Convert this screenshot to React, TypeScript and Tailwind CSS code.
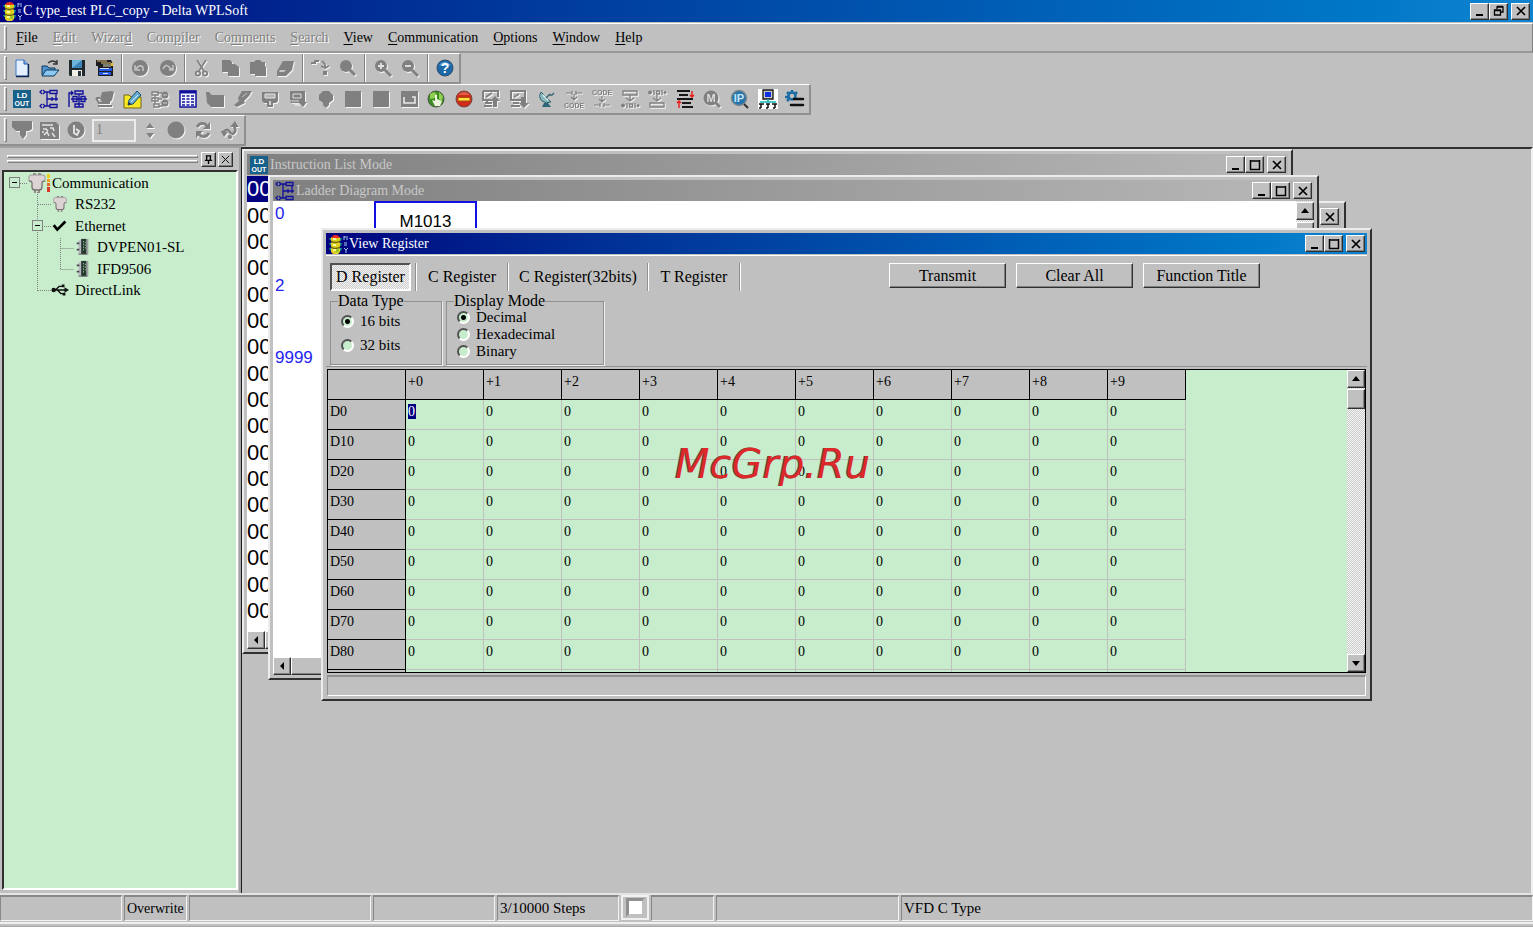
import type { ReactNode } from "react";

const raised =
  "border border-t-white border-l-white border-r-[#303030] border-b-[#303030] bg-[#c0c0c0] shadow-[inset_-1px_-1px_0_#808080]";
const stipple =
  "bg-[repeating-conic-gradient(#f4f4f4_0_25%,#cccccc_0_50%)] bg-[length:2px_2px]";
const emboss = "text-[#808080] [text-shadow:1px_1px_0_#fff]";

type SvgProps = { children: ReactNode; className?: string };

const Svg = ({ children, className = "size-5" }: SvgProps) => (
  <svg viewBox="0 0 20 20" className={`shrink-0 ${className}`} fill="none" aria-hidden="true">
    {children}
  </svg>
);

const SvgText = ({ x, y, size, fill, children }: { x: number; y: number; size: number; fill: string; children: string }) => (
  <text
    x={x}
    y={y}
    fontSize={size}
    fill={fill}
    fontWeight="bold"
    textAnchor="middle"
    fontFamily="Liberation Sans, sans-serif"
  >
    {children}
  </text>
);

const TrafficIcon = () => (
  <Svg>
    <path d="M1 4h3l1 3-3-1zM1 9h3l1 3-3-1zM1 14h3l1 3-3-1zM14 4h-3v3h2zM14 9h-3v3h2zM14 14h-3v3h2z" fill="#1a9484" />
    <path d="M3 3h9v4l-1 1 1 1v4l-1 1 1 1v3l-2 2H5l-2-2v-3l1-1-1-1V9l1-1-1-1z" fill="#e0d020" />
    <path d="M4 3q0-2 3.500-2T11 3l1 1H3z" fill="#e62c20" />
    <path d="M3 7q4 3 9 0M3 13q4 3 9 0" stroke="#6c6414" strokeWidth="1.3" />
    <path d="M5 4h3v2H5zM5 10h3v2H5zM5 15h3v2H5z" fill="#fffa98" />
    <path d="M9 15h2v3H7z" fill="#98c828" />
    <path d="M16 2v4M16 3h4M18 5h2M16 9h3M16 11h3M16 14l2 2 2-2M18 16v3" stroke="#a4cce8" />
  </Svg>
);

const LdOutIcon = () => (
  <Svg>
    <rect x="1" y="1" width="18" height="18" fill="#17608a" />
    <SvgText x={10} y={9} size={8} fill="#fff">LD</SvgText>
    <SvgText x={10} y={17} size={7} fill="#fff">OUT</SvgText>
  </Svg>
);

const LadderIcon = () => (
  <Svg>
    <path
      d="M3 1L1 3l2 2M4 1l2 2-2 2M3 15l-2 2 2 2M4 15l2 2-2 2M6 3h5M6 17h5M8 3v7h4M8 10v7M11 1.500h7v3h-7zM11 15.500h7v3h-7zM17 5v3M12 10h7M13 8v4M17 8v4"
      stroke="#10109a"
      strokeWidth="1.3"
    />
  </Svg>
);

const icons: Record<string, ReactNode> = {
  new: (
    <>
      <path d="M4 2h8l4 4v12H4z" fill="#e4f0ff" stroke="#3c7cd0" />
      <path d="M12 2v4h4" fill="#8cbcf0" stroke="#24549c" />
      <path d="M16.500 6v12.500H4" stroke="#10244c" strokeWidth="1.3" />
    </>
  ),
  open: (
    <>
      <path d="M2 17V8h5l2 2h6v3" fill="#4c94d0" stroke="#103858" />
      <path d="M2 18l4-6h13l-5 6z" fill="#8cc8f4" stroke="#103858" />
      <path d="M8 5q5-4 9 0M17 2v4h-4" stroke="#303030" strokeWidth="1.3" />
    </>
  ),
  save: (
    <>
      <path d="M2 2h16v16H3l-1-1z" fill="#20282c" />
      <path d="M5 2h10v8H5z" fill="#3c84b8" />
      <path d="M5 10l10-8H5z" fill="#6cb4dc" />
      <path d="M5 12h10v6H5z" fill="#f0f0e8" />
      <path d="M11 13h3v5h-3z" fill="#26323a" />
    </>
  ),
  plc: (
    <>
      <path d="M1 2h15l2 4v12H3V8H1z" fill="#1c1c20" />
      <path d="M2 3h10M6 5h10" stroke="#e4c878" />
      <path d="M8 6h8v3H8z" fill="#7c7c70" />
      <path d="M4 10h13v3H4zM4 14h12v3H4z" fill="#2458e0" />
      <path d="M5 10.500h9M8 15.500h5" stroke="#c6dcff" />
      <path d="M16 5h2v3h-2z" fill="#f0c020" />
    </>
  ),
  undo: (
    <>
      <circle cx="10" cy="10" r="8" fill="#808080" />
      <path d="M5 7v5h5M6 11q3-5 7-2v4" stroke="#c4c4c4" strokeWidth="1.5" />
    </>
  ),
  redo: (
    <>
      <circle cx="10" cy="10" r="8" fill="#808080" />
      <path d="M5 11q3-6 6-2 2 3 4 1M15 7v5h-4" stroke="#c4c4c4" strokeWidth="1.5" />
    </>
  ),
  cut: (
    <>
      <path d="M5 2l7 11M14 2L7 13" stroke="#808080" strokeWidth="1.700" />
      <circle cx="6" cy="15.500" r="2.2" stroke="#808080" strokeWidth="1.700" />
      <circle cx="13" cy="15.500" r="2.2" stroke="#808080" strokeWidth="1.700" />
    </>
  ),
  copy: <path d="M2 2h8l2 2v2h3l4 3v9H8v-4H2z" fill="#808080" />,
  paste: <path d="M2 4h4l2-2h4l2 2h3v4l1 1v9H7v-2H2z" fill="#808080" />,
  erase: (
    <>
      <path d="M8 3h11l-2 9-6 6H2v-5z" fill="#808080" />
      <path d="M5 12h6l-2 2H4z" fill="#c8c8c8" />
    </>
  ),
  jump: (
    <>
      <path d="M1 5h5M5 2v4M5 3h4M12 3l3 3v4M11 8l4 2 4-2" stroke="#808080" strokeWidth="1.8" />
      <path d="M13 13h4v4h-4z" fill="#808080" />
    </>
  ),
  find: (
    <>
      <circle cx="8" cy="8" r="6" fill="#808080" />
      <path d="M12 12l5 5" stroke="#808080" strokeWidth="3" />
    </>
  ),
  zoomin: (
    <>
      <circle cx="8" cy="8" r="6" fill="#808080" />
      <path d="M12 12l6 6" stroke="#808080" strokeWidth="3" />
      <path d="M5 8h6M8 5v6" stroke="#e4e4e4" strokeWidth="1.8" />
    </>
  ),
  zoomout: (
    <>
      <circle cx="8" cy="8" r="6" fill="#808080" />
      <path d="M12 12l6 6" stroke="#808080" strokeWidth="3" />
      <path d="M5 8h6" stroke="#e4e4e4" strokeWidth="1.8" />
    </>
  ),
  help: (
    <>
      <circle cx="10" cy="10" r="8" fill="#1c68a8" stroke="#34506c" />
      <path d="M4 7q5-6 12 0-5 2-12 0z" fill="#5ca4d4" />
      <SvgText x={10} y={15} size={14} fill="#fff">?</SvgText>
    </>
  ),
  sfc: (
    <>
      <path d="M2 18V4h4M4 2l2 2-2 2M8 2h8v3H8zM12 5v13M4 10h16M8 15h8v3H8z" stroke="#10109a" strokeWidth="1.4" />
      <path d="M6 7.500h4v5H6zM14 7.500h4v5h-4z" stroke="#10109a" strokeWidth="1.3" />
    </>
  ),
  compile: (
    <>
      <path d="M7 3l10-1 2 1-2 8-2 2H7L5 10z" fill="#808080" />
      <path d="M1 9l3 5h11M3 17h14M1 9h4" stroke="#808080" strokeWidth="2" />
    </>
  ),
  edit: (
    <>
      <path d="M2 6h5l2 2h10v11H2z" fill="#f8e820" stroke="#70641c" />
      <path d="M6 16l1-5 8-9 4 4-8 9z" fill="#64acd4" stroke="#20506c" />
      <path d="M9 13l7-7" stroke="#d8f0ff" />
      <path d="M6 16l1-3 2 2z" fill="#222" />
    </>
  ),
  tree: (
    <>
      <path d="M2 3h6v3H2zM2 9h6v3H2zM4 15h5v3H4zM5 6v9M8 4h4M8 10h4M9 17h4" stroke="#808080" strokeWidth="1.4" />
      <circle cx="15" cy="6" r="3.5" fill="#808080" />
      <circle cx="15" cy="14" r="3.5" fill="#808080" />
      <path d="M13 6h4M13 14h4" stroke="#ccc" />
    </>
  ),
  grid: (
    <>
      <path d="M2 2h16v16H2z" fill="#f4f4ff" stroke="#10109a" strokeWidth="1.5" />
      <path d="M2 3h16" stroke="#10109a" strokeWidth="3" />
      <path d="M4 7h3M8.500 7h3M13 7h3M4 10h3M8.500 10h3M13 10h3M4 13h3M8.500 13h3M13 13h3M4 16h3M8.500 16h3M13 16h3" stroke="#10109a" strokeWidth="1.4" />
    </>
  ),
  folder: <path d="M1 3h3l3 3h12v12H6l-4-4z" fill="#808080" />,
  wand: (
    <>
      <path d="M9 2h10l-3 5-5 5 1 2-8 4-3-2 5-4-1-3z" fill="#808080" />
      <path d="M14 4l-5 4" stroke="#c8c8c8" />
    </>
  ),
  monitor: (
    <>
      <path d="M2 3h16v9l-2 2h-3v4H7v-4H4l-2-2z" fill="#808080" />
      <path d="M5 5h10v4H5z" fill="#b4b4b4" stroke="#e4e4e4" />
      <path d="M9 12h2v4H9z" fill="#d0d0d0" />
    </>
  ),
  monitorDown: (
    <>
      <path d="M2 2h15v11h2l-4 5-4-4H4l-2-1 2-2H2z" fill="#808080" />
      <path d="M5 5h8v4H5zM4 12h7M6 15h6" stroke="#e0e0e0" />
    </>
  ),
  bulb: <path d="M7 2h6l4 4v5l-4 3v2l-3 3-3-3v-2l-4-3V6z" fill="#808080" />,
  block: <path d="M2 2h16v16H2z" fill="#808080" />,
  frame: (
    <>
      <path d="M2 2h17v16H2z" fill="#808080" />
      <path d="M5 8v6h11V8h-3" stroke="#e8e8e8" strokeWidth="1.6" />
    </>
  ),
  run: (
    <>
      <circle cx="10" cy="10" r="8" fill="#3c8c24" stroke="#4c5c44" />
      <path d="M4 5q5-4 7 1l-2 3-5 1zM13 3l4 4-1 5-3-2z" fill="#90d050" />
      <path d="M9 6v6l-3-1 3 6h5l2-5-5-2V6z" fill="#ecf4dc" />
    </>
  ),
  stop: (
    <>
      <circle cx="10" cy="10" r="8" fill="#d02c1c" stroke="#7c4440" />
      <path d="M4 6q6-6 12 0z" fill="#dc6048" />
      <path d="M4 8.500h12v3.500H4z" fill="#ffe43c" stroke="#b04c14" />
    </>
  ),
  upload: (
    <>
      <path d="M2 2h15v6M2 2v9h8M4 14h7M3 17h8M5 8l6-4M6 11v3" stroke="#808080" strokeWidth="2" />
      <path d="M14 7l5 5h-3v6h-4v-6h-3z" fill="#808080" />
    </>
  ),
  download: (
    <>
      <path d="M2 2h14v9H2zM4 14h6M2 17h9M5 8l5-3" stroke="#808080" strokeWidth="2" />
      <path d="M12 8h5v6h3l-5 5-5-5h2z" fill="#808080" />
    </>
  ),
  dish: (
    <>
      <path d="M4 3q-3 5 1 9 4 3 9 1z" fill="#8cb8bc" stroke="#2c6470" />
      <path d="M6 6l5 5" stroke="#e0f4f4" strokeWidth="1.500" />
      <path d="M9 9l4-4M12 6h3l2-2" stroke="#34646c" strokeWidth="1.4" />
      <path d="M7 14l-2 4h9l-3-4" fill="#2c6478" />
    </>
  ),
  toCode: (
    <>
      <path d="M2 4h6M8 2v4M12 2v4M12 4h6M10 5v6M7 8l3 3 3-3" stroke="#808080" strokeWidth="1.2" />
      <SvgText x={10} y={19} size={7} fill="#808080">CODE</SvgText>
    </>
  ),
  fromCode: (
    <>
      <SvgText x={10} y={6} size={7} fill="#808080">CODE</SvgText>
      <path d="M10 7v6M7 10l3 3 3-3M2 16h6M8 14v4M12 14v4M12 16h6" stroke="#808080" strokeWidth="1.2" />
    </>
  ),
  toSfc: (
    <>
      <path d="M3 2h14v4H3zM10 6v6M6 9l4 3 4-3M7 14v5M15 14v5M9.500 15h3v3h-3z" stroke="#808080" strokeWidth="1.3" />
      <circle cx="3" cy="16.500" r="2" fill="#808080" />
      <circle cx="18" cy="16.500" r="1.500" fill="#808080" />
    </>
  ),
  fromSfc: (
    <>
      <path d="M3 14h14v4H3zM10 6v6M6 9l4 3 4-3M7 1v5M15 1v5M9.500 2h3v3h-3z" stroke="#808080" strokeWidth="1.3" />
      <circle cx="3" cy="3.500" r="2" fill="#808080" />
      <circle cx="18" cy="3.500" r="1.500" fill="#808080" />
    </>
  ),
  steps: (
    <>
      <path d="M2 2h13M4 6h9M2 10h16M7 14h9M7 18h11" stroke="#181818" strokeWidth="1.8" />
      <path d="M17 2v6M15 6l2 2 2-2M4 12v7M2 14l2-2 2 2" stroke="#f01818" strokeWidth="1.4" />
    </>
  ),
  findM: (
    <>
      <circle cx="9" cy="9" r="7.500" fill="#808080" />
      <path d="M14 14l4 4" stroke="#808080" strokeWidth="3" />
      <SvgText x={9} y={13} size={11} fill="#dcdcdc">M</SvgText>
    </>
  ),
  findIp: (
    <>
      <circle cx="9" cy="9" r="7.500" fill="#2474ac" stroke="#7c888c" strokeWidth="1.500" />
      <path d="M14 15l4 4" stroke="#303030" strokeWidth="2" />
      <SvgText x={9} y={13} size={11} fill="#c8e4f8">IP</SvgText>
    </>
  ),
  network: (
    <>
      <path d="M0 0h20v20H0z" fill="#fff" />
      <path d="M5 1h10v9H5z" fill="#c8c8c8" stroke="#101010" strokeWidth="1.300" />
      <path d="M7 3h6v5H7z" fill="#1030e0" />
      <path d="M10 10v3M2 13h16" stroke="#10b4b4" strokeWidth="1.500" />
      <path d="M1 15h5M8 15h4M14 15h5M3 15v4M10 15v4M17 15v4M1 19h2M8 19h2M15 19h2" stroke="#101010" strokeWidth="1.500" />
    </>
  ),
  gear: (
    <>
      <circle cx="7" cy="7" r="3.500" stroke="#1c6ca4" strokeWidth="2.500" />
      <path d="M7 1v2M0 8h3M2 3l2 2M12 3l-2 2M2 12l2-2" stroke="#1c6ca4" strokeWidth="2.500" />
      <path d="M9 10h9M6 16h12" stroke="#101010" strokeWidth="2.500" strokeLinecap="round" />
    </>
  ),
  funnel: <path d="M0 1h20v8l-3 2h-3v4l-3 4-3-4v-4H4L0 7z" fill="#808080" />,
  pattern: (
    <>
      <path d="M1 2h16l3 3v14H1z" fill="#808080" />
      <path d="M3 5h11M4 9h3l2 2M11 8h3l1 3M5 15l3-3 2 4M13 13l3 4M3 12h2" stroke="#e4e4e4" strokeWidth="1.500" />
    </>
  ),
  timer: (
    <>
      <circle cx="10" cy="10" r="8.500" fill="#808080" />
      <path d="M8 5v8l3 2 2-4-3-2" stroke="#e8e8e8" strokeWidth="1.800" />
    </>
  ),
  dot: <circle cx="10" cy="10" r="8.500" fill="#808080" />,
  cycle: (
    <>
      <path d="M4 7q3-5 8-3l2 2M16 13q-3 5-8 3l-2-2" stroke="#808080" strokeWidth="2.800" />
      <path d="M17 2v7h-7zM3 18v-7h7z" fill="#808080" />
    </>
  ),
  route: (
    <>
      <path d="M2 13q5-5 7-2t4 3q4-3 1-8" stroke="#808080" strokeWidth="2.600" />
      <path d="M15 1l4 6H10zM1 11l7 1-4 5z" fill="#808080" />
      <circle cx="10" cy="17" r="2" fill="#808080" />
    </>
  ),
  ld: <LdOutIcon />,
  ladder: <LadderIcon />,
};

type ToolItem = { name: string; off?: boolean };

const Tool = ({ name, off }: ToolItem) => (
  <button
    type="button"
    aria-label={name}
    disabled={off}
    className={`flex h-7 flex-1 items-center justify-center ${off ? "drop-shadow-[1px_1px_0_#f4f4f4]" : ""}`}
  >
    {name === "ld" || name === "ladder" ? icons[name] : <Svg>{icons[name]}</Svg>}
  </button>
);

const Grip = () => (
  <span className="mr-px ml-1 h-[24px] w-[3px] shrink-0 border border-t-white border-l-white border-r-[#808080] border-b-[#808080]" />
);

const Sep = () => (
  <span className="flex h-7 w-[7px] shrink-0 justify-center">
    <span className="w-[2px] border-r border-l border-r-white border-l-[#808080]" />
  </span>
);

const fileTools: (ToolItem | null)[] = [
  { name: "new" },
  { name: "open" },
  { name: "save" },
  { name: "plc" },
  null,
  { name: "undo", off: true },
  { name: "redo", off: true },
  null,
  { name: "cut", off: true },
  { name: "copy", off: true },
  { name: "paste", off: true },
  { name: "erase", off: true },
  null,
  { name: "jump", off: true },
  { name: "find", off: true },
  null,
  { name: "zoomin", off: true },
  { name: "zoomout", off: true },
  null,
  { name: "help" },
];

const plcTools: ToolItem[] = [
  { name: "ld" },
  { name: "ladder" },
  { name: "sfc" },
  { name: "compile", off: true },
  { name: "edit" },
  { name: "tree", off: true },
  { name: "grid" },
  { name: "folder", off: true },
  { name: "wand", off: true },
  { name: "monitor", off: true },
  { name: "monitorDown", off: true },
  { name: "bulb", off: true },
  { name: "block", off: true },
  { name: "block", off: true },
  { name: "frame", off: true },
  { name: "run" },
  { name: "stop" },
  { name: "upload", off: true },
  { name: "download", off: true },
  { name: "dish" },
  { name: "toCode", off: true },
  { name: "fromCode", off: true },
  { name: "toSfc", off: true },
  { name: "fromSfc", off: true },
  { name: "steps" },
  { name: "findM", off: true },
  { name: "findIp" },
  { name: "network" },
  { name: "gear" },
];

const barClass =
  "flex h-[31px] items-center border-t border-r-2 border-b-2 border-t-white border-r-[#909090] border-b-[#909090]";

const menus = [
  { key: "F", rest: "ile" },
  { key: "E", rest: "dit", off: true },
  { before: "Wizar", key: "d", rest: "", off: true },
  { before: "Com", key: "p", rest: "iler", off: true },
  { before: "Co", key: "m", rest: "ments", off: true },
  { key: "S", rest: "earch", off: true },
  { key: "V", rest: "iew" },
  { key: "C", rest: "ommunication" },
  { key: "O", rest: "ptions" },
  { key: "W", rest: "indow" },
  { key: "H", rest: "elp" },
];

const CaptionButton = ({ kind }: { kind: "minimize" | "maximize" | "restore" | "close" }) => (
  <button
    type="button"
    aria-label={kind}
    className={`flex h-[17px] w-[19px] items-center justify-center ${raised} ${kind === "close" ? "ml-[3px]" : ""}`}
  >
    <svg viewBox="0 0 12 12" className="size-3" fill="none" stroke="#000" aria-hidden="true">
      {kind === "minimize" && <path d="M2 10h7" strokeWidth="2" />}
      {kind === "maximize" && <path d="M1.500 1v9.500h9V1M1 2h10" strokeWidth="1.500" />}
      {kind === "restore" && <path d="M4 4V2h6v5H8M4 1.500h6M1.500 5v5h6V5zM1 5.500h7" strokeWidth="1.300" />}
      {kind === "close" && <path d="M2 2l8 8M10 2l-8 8" strokeWidth="1.700" />}
    </svg>
  </button>
);

type MdiWindowProps = {
  title: string;
  icon: ReactNode;
  place: string;
  active?: boolean;
  children?: ReactNode;
};

const MdiWindow = ({ title, icon, place, active, children }: MdiWindowProps) => (
  <section
    className={`absolute flex flex-col border-2 border-t-[#ececec] border-r-[#303030] border-b-[#303030] border-l-[#ececec] bg-[#c0c0c0] p-[3px] ${place}`}
  >
    <header
      className={`flex h-[21px] shrink-0 items-center bg-linear-to-r pr-[2px] pl-[2px] text-sm ${
        active ? "from-[#000080] to-[#1084d0] text-white" : "from-[#808080] to-[#b8b8b8] text-[#c8c8c8]"
      }`}
    >
      {icon}
      <h2 className="flex-1 pl-[1px]">{title}</h2>
      <CaptionButton kind="minimize" />
      <CaptionButton kind="maximize" />
      <CaptionButton kind="close" />
    </header>
    {children}
  </section>
);

const ArrowButton = ({ dir }: { dir: "up" | "down" | "left" }) => (
  <button type="button" aria-label={`Scroll ${dir}`} className={`flex size-[18px] shrink-0 items-center justify-center ${raised}`}>
    <svg viewBox="0 0 10 10" className="size-[10px]" aria-hidden="true">
      {dir === "up" && <path d="M5 2l4 5H1z" />}
      {dir === "down" && <path d="M1 3h8L5 8z" />}
      {dir === "left" && <path d="M7 1v8L3 5z" />}
    </svg>
  </button>
);

const InstructionList = () => (
  <div className="flex min-h-0 flex-1 flex-col pt-px">
    <div className="min-h-0 flex-1 overflow-hidden bg-white font-['Liberation_Sans',sans-serif] text-[22px] leading-[22px]">
      <ol className="flex h-[448px] flex-col">
        {Array.from({ length: 17 }, (_, i) => (
          <li
            key={i}
            className={`flex flex-1 items-center ${i === 0 ? "w-[22px] bg-[#000080] text-white" : "text-black"}`}
          >
            00
          </li>
        ))}
      </ol>
    </div>
    <div className={`flex ${stipple}`}>
      <ArrowButton dir="left" />
      <span className={`w-10 ${raised}`} />
    </div>
  </div>
);

const LadderDiagram = () => (
  <div className="flex min-h-0 flex-1 flex-col">
    <div className="flex min-h-0 flex-1 bg-white font-['Liberation_Sans',sans-serif] text-[17px]">
      <ol className="w-[101px] pl-[2px] leading-[26px] text-[#2424f0]">
        <li className="h-[72px]">0</li>
        <li className="h-[72px]">2</li>
        <li className="h-[72px]">9999</li>
      </ol>
      <div className="h-[60px] w-[103px] border-2 border-[#1010e0] pt-[6px] text-center text-black">M1013</div>
      <div className={`ml-auto w-[18px] pt-px ${stipple}`}>
        <ArrowButton dir="up" />
        <div className={`mt-[2px] h-10 ${raised}`} />
      </div>
    </div>
    <div className={`flex ${stipple}`}>
      <ArrowButton dir="left" />
      <span className={`w-40 ${raised}`} />
    </div>
  </div>
);

const Expander = ({ open }: { open: string }) => (
  <button
    type="button"
    aria-label={open}
    className="flex size-[11px] shrink-0 items-center justify-center border border-[#808080] bg-[#c7edcc]"
  >
    <span className="h-px w-[5px] bg-black" />
  </button>
);

const PlugIcon = ({ className }: { className: string }) => (
  <Svg className={className}>
    <path d="M6 0h3v3H6zM11 0h3v3h-3zM7 16h2v4H7zM11 16h2v4h-2z" fill="#948c8c" />
    <path d="M2 4q0-2 2-2h12q2 0 2 2v4q-3 0-3 2v4q0 3-3 3H8q-3 0-3-3v-4q0-2-3-2z" fill="#dcd4d4" />
    <path d="M2 8q3 0 3 2v4q0 3 3 3h4q3 0 3-3v-4q0-2 3-2" stroke="#787070" strokeWidth="1.300" />
    <path d="M2 8V4q0-2 2-2h12q2 0 2 2v4" stroke="#a09898" />
  </Svg>
);

const ModuleIcon = () => (
  <Svg className="size-[18px]">
    <path d="M5 3l4-2v17H5z" fill="#b8b8c0" />
    <path d="M8 1h6v17H8z" fill="#24382c" />
    <path d="M14 1h2v17h-2z" fill="#a0a0a4" />
    <path d="M3 6h3M3 13h3" stroke="#484850" strokeWidth="2" />
    <path d="M10 4h1M10 7h1M10 10h1M10 13h1M12 5h1M12 8h1M12 11h1" stroke="#9cc4a8" strokeWidth="1.500" />
    <path d="M5 18h10" stroke="#606068" />
  </Svg>
);

const rowClass = "relative flex flex-1 items-center";

const CommunicationTree = () => (
  <div className="relative">
    <svg className="absolute top-0 left-0 h-[130px] w-[90px]" fill="none" stroke="#808080" strokeDasharray="1 1" aria-hidden="true">
      <path d="M16 11.500h8M33.500 20v99M34 32.500h13M40 54.500h8M34 118.500h14M56.500 66v32M56.500 76.500h13M56.500 97.500h13" />
    </svg>
    <ul className="flex h-[129px] flex-col text-[15px] leading-[20px] text-black">
      <li className={`${rowClass} pl-[5px]`}>
        <Expander open="Collapse Communication" />
        <span className="flex w-[32px] items-center pl-[7px]">
          <PlugIcon className="size-5" />
          <svg viewBox="0 0 4 20" className="h-5 w-1" aria-hidden="true">
            <path d="M0 1h3v4H0z" fill="#f0d018" />
            <path d="M0 6h3v3H0z" fill="#f0a018" />
            <path d="M0 10h3v3H0z" fill="#e86820" />
            <path d="M0 14h3v5H0z" fill="#d83828" />
          </svg>
        </span>
        Communication
      </li>
      <li className={`${rowClass} pl-[48px]`}>
        <span className="w-[23px]">
          <PlugIcon className="size-4" />
        </span>
        RS232
      </li>
      <li className={`${rowClass} pl-[28px]`}>
        <Expander open="Collapse Ethernet" />
        <span className="w-[32px] pl-[8px]">
          <Svg className="size-[18px]">
            <path d="M3 9l4 5 9-9" stroke="#000" strokeWidth="3" />
          </Svg>
        </span>
        Ethernet
      </li>
      <li className={`${rowClass} pl-[70px]`}>
        <span className="w-[23px]">
          <ModuleIcon />
        </span>
        DVPEN01-SL
      </li>
      <li className={`${rowClass} pl-[70px]`}>
        <span className="w-[23px]">
          <ModuleIcon />
        </span>
        IFD9506
      </li>
      <li className={`${rowClass} pl-[47px]`}>
        <span className="w-[24px]">
          <Svg className="size-[18px]">
            <path d="M2 10h15M5 10l4-4h4M7 10l4 4h3" stroke="#101010" strokeWidth="1.500" />
            <circle cx="3" cy="10" r="2.500" fill="#101010" />
            <path d="M15 7l5 3-5 3zM12 4h3v3h-3zM13 13h3v3h-3z" fill="#101010" />
          </Svg>
        </span>
        DirectLink
      </li>
    </ul>
  </div>
);

const Sidebar = () => (
  <aside className="flex w-[241px] shrink-0 flex-col border-t-2 border-r-2 border-t-[#a0a0a0] border-r-[#a0a0a0] pr-px pb-[3px] pl-[2px]">
    <div className="flex h-[22px] items-center gap-[2px] px-[5px]">
      <span className="mr-px flex flex-1 flex-col gap-[2px]">
        <span className="h-[3px] border border-t-white border-r-[#808080] border-b-[#808080] border-l-white" />
        <span className="h-[3px] border border-t-white border-r-[#808080] border-b-[#808080] border-l-white" />
      </span>
      <button type="button" aria-label="Pin panel" className={`flex size-[15px] items-center justify-center ${raised}`}>
        <svg viewBox="0 0 12 12" className="size-[11px]" fill="none" stroke="#000" strokeWidth="1.500" aria-hidden="true">
          <path d="M4 2v5M3 2h6M8 2v5M2 7h8M6 7v4" />
        </svg>
      </button>
      <button type="button" aria-label="Close panel" className={`flex size-[15px] items-center justify-center ${raised}`}>
        <svg viewBox="0 0 12 12" className="size-[11px]" stroke="#000" aria-hidden="true">
          <path d="M2 2l8 8M10 2l-8 8" />
        </svg>
      </button>
    </div>
    <div className="flex-1 border-2 border-t-[#303030] border-r-white border-b-white border-l-[#303030] bg-[#c7edcc]">
      <CommunicationTree />
    </div>
  </aside>
);

type RadioProps = { name: string; label: string; checked?: boolean; className?: string };

const Radio = ({ name, label, checked, className = "" }: RadioProps) => (
  <label className={`flex items-center text-[15px] ${className}`}>
    <input
      type="radio"
      name={name}
      defaultChecked={checked}
      className="size-[13px] shrink-0 appearance-none rounded-full border-2 border-t-[#505050] border-r-white border-b-white border-l-[#505050] bg-[#c7edcc] checked:bg-[radial-gradient(circle,#000_0_2px,#c7edcc_3px)]"
    />
    {label}
  </label>
);

const fieldsetClass =
  "h-[72px] border border-[#909090] px-[7px] shadow-[1px_1px_0_#f0f0f0]";

const tabs = [
  { label: "C Register", width: "w-[90px]" },
  { label: "C Register(32bits)", width: "w-[138px]" },
  { label: "T Register", width: "w-[90px]" },
];

const TabLine = () => <span className="w-[2px] border-r border-l border-r-white border-l-[#909090]" />;

const rows = ["D0", "D10", "D20", "D30", "D40", "D50", "D60", "D70", "D80"];
const columns = ["+0", "+1", "+2", "+3", "+4", "+5", "+6", "+7", "+8", "+9"];
const headCell =
  "h-[30px] w-[78px] border-r border-b border-black bg-[#c0c0c0] px-[2px] pt-[2px] text-left align-top font-normal";

const RegisterTable = () => (
  <table className="w-[858px] table-fixed border-separate border-spacing-0 self-start text-sm text-black">
    <thead>
      <tr>
        <td className={headCell} />
        {columns.map((column) => (
          <th key={column} scope="col" className={headCell}>
            {column}
          </th>
        ))}
      </tr>
    </thead>
    <tbody>
      {rows.map((row) => (
        <tr key={row}>
          <th scope="row" className={headCell}>
            {row}
          </th>
          {columns.map((column) => (
            <td key={column} className="h-[30px] border-r border-b border-[#c0c0c0] px-[2px] pt-[2px] align-top">
              {row === "D0" && column === "+0" ? (
                <span className="bg-[#000080] pr-px text-white">0</span>
              ) : (
                "0"
              )}
            </td>
          ))}
        </tr>
      ))}
      <tr>
        <td className={headCell} />
        {columns.map((column) => (
          <td key={column} className="border-r border-[#c0c0c0]" />
        ))}
      </tr>
    </tbody>
  </table>
);

const ViewRegister = () => (
  <div className="mt-px flex min-h-0 flex-1 flex-col border-t border-t-white">
    <div className="border-b border-b-[#909090] px-[4px] pt-[7px] pb-px text-black">
      <div className="flex h-[28px]">
        <button
          type="button"
          aria-pressed="true"
          className={`w-[81px] border-2 border-t-[#505050] border-r-white border-b-white border-l-[#505050] text-base leading-[24px] whitespace-nowrap ${stipple}`}
        >
          D Register
        </button>
        <span className="w-[4px]" />
        <TabLine />
        {tabs.map((tab) => (
          <span key={tab.label} className="flex">
            <button type="button" className={`text-base whitespace-nowrap ${tab.width}`}>
              {tab.label}
            </button>
            <TabLine />
          </span>
        ))}
        <div className="ml-[148px] flex gap-[10px]">
          {["Transmit", "Clear All", "Function Title"].map((label) => (
            <button key={label} type="button" className={`h-[25px] w-[117px] text-base leading-[20px] ${raised}`}>
              {label}
            </button>
          ))}
        </div>
      </div>
      <div className="flex gap-[4px] pt-[2px]">
        <fieldset className={`w-[112px] ${fieldsetClass}`}>
          <legend className="text-base leading-[16px]">Data Type</legend>
          <Radio name="type" label="16 bits" checked className="h-6 gap-[6px] pl-[3px]" />
          <Radio name="type" label="32 bits" className="h-6 gap-[6px] pl-[3px]" />
        </fieldset>
        <fieldset className={`w-[158px] ${fieldsetClass}`}>
          <legend className="text-base leading-[16px]">Display Mode</legend>
          <Radio name="mode" label="Decimal" checked className="h-[17px] gap-[6px] pl-[3px]" />
          <Radio name="mode" label="Hexadecimal" className="h-[17px] gap-[6px] pl-[3px]" />
          <Radio name="mode" label="Binary" className="h-[17px] gap-[6px] pl-[3px]" />
        </fieldset>
      </div>
    </div>
    <div className="relative mx-px mt-[2px] flex h-[304px] overflow-hidden border border-black bg-[#c7edcc]">
      <RegisterTable />
      <div className={`ml-auto flex w-[18px] shrink-0 flex-col ${stipple}`}>
        <ArrowButton dir="up" />
        <div className={`mt-px h-[20px] ${raised}`} />
        <span className="flex-1" />
        <ArrowButton dir="down" />
      </div>
      <p className="pointer-events-none absolute top-[74px] left-[347px] font-['DejaVu_Sans',sans-serif] text-[40px] leading-none text-[#dc2828] italic [text-shadow:-1px_0_0_#4c5c50]">
        McGrp.Ru
      </p>
    </div>
    <div className="mx-px mt-[2px] flex-1 border border-t-2 border-t-[#909090] border-r-white border-b-white border-l-[#909090]" />
  </div>
);

const statusCell =
  "flex h-[26px] items-center overflow-hidden border border-t-2 border-t-[#888] border-r-[#f4f4f4] border-b-[#f4f4f4] border-l-[#888] px-[2px] whitespace-nowrap";

const StatusBar = () => (
  <footer className="border-t-2 border-t-[#e4e4e4] text-[15px] text-black">
    <div className="flex gap-[2px]">
      <span className={`w-[122px] ${statusCell}`} />
      <span className={`w-[63px] text-sm ${statusCell}`}>Overwrite</span>
      <span className={`w-[182px] ${statusCell}`} />
      <span className={`w-[122px] ${statusCell}`} />
      <span className={`w-[122px] ${statusCell}`}>3/10000 Steps</span>
      <label className="flex h-[25px] w-[28px] items-center justify-center border-2 border-[#f0f0f0] p-px">
        <input
          type="checkbox"
          aria-label="Monitor state"
          className="size-[19px] appearance-none border-3 border-t-[#909090] border-r-[#c0c0c0] border-b-[#c0c0c0] border-l-[#909090] bg-white"
        />
      </label>
      <span className={`w-[63px] ${statusCell}`} />
      <span className={`w-[183px] ${statusCell}`} />
      <span className={`flex-1 ${statusCell}`}>VFD C Type</span>
    </div>
    <div className="mt-px h-[5px] border-t-2 border-b border-t-[#f0f0f0] border-b-[#a8a8a8]" />
  </footer>
);

export default function App() {
  return (
    <div className="flex min-h-screen flex-col bg-[#c0c0c0] font-['Liberation_Serif',serif]">
      <header className="flex h-[22px] items-center bg-linear-to-r from-[#000080] to-[#1084d0] pr-[3px] pl-[2px] text-sm text-white">
        <TrafficIcon />
        <h1 className="flex-1 pl-px">C type_test PLC_copy - Delta WPLSoft</h1>
        <CaptionButton kind="minimize" />
        <CaptionButton kind="restore" />
        <CaptionButton kind="close" />
      </header>
      <nav className="mt-px flex h-[30px] items-center border-t border-r border-b-2 border-t-white border-r-[#808080] border-b-[#989898] text-sm text-black">
        <Grip />
        <div className="flex gap-[15px] pl-[8px]">
          {menus.map((menu) => (
            <button key={menu.key + menu.rest} type="button" disabled={menu.off} className={menu.off ? emboss : ""}>
              {menu.before}
              <u className="underline-offset-2">{menu.key}</u>
              {menu.rest}
            </button>
          ))}
        </div>
      </nav>
      <div className={`w-[461px] ${barClass}`}>
        <Grip />
        {fileTools.map((tool, i) => (tool ? <Tool key={i} {...tool} /> : <Sep key={i} />))}
      </div>
      <div className={`w-[811px] ${barClass}`}>
        <Grip />
        {plcTools.map((tool, i) => (
          <Tool key={i} {...tool} />
        ))}
      </div>
      <div className={`w-[246px] ${barClass}`}>
        <Grip />
        <Tool name="funnel" off />
        <Tool name="pattern" off />
        <Tool name="timer" off />
        <input
          type="text"
          aria-label="Interval"
          defaultValue="1"
          disabled
          className="mx-[2px] h-[23px] w-[44px] border-2 border-[#ececec] px-[2px] text-sm text-[#808080]"
        />
        <span className="flex w-6 flex-col items-center gap-[5px] drop-shadow-[1px_1px_0_#fff]">
          <svg viewBox="0 0 10 5" className="h-[5px] w-[10px]" fill="#808080" aria-hidden="true">
            <path d="M5 0l4 5H1z" />
          </svg>
          <svg viewBox="0 0 10 5" className="h-[5px] w-[10px]" fill="#808080" aria-hidden="true">
            <path d="M1 0h8L5 5z" />
          </svg>
        </span>
        <Tool name="dot" off />
        <Tool name="cycle" off />
        <Tool name="route" off />
      </div>
      <main className="flex flex-1">
        <Sidebar />
        <div className="relative mt-px flex-1 overflow-hidden border-t-2 border-r-2 border-l border-t-[#303030] border-r-[#f0f0f0] border-l-[#202020]">
          <MdiWindow title="" icon={<LdOutIcon />} place="top-[52px] left-[53px] h-[400px] w-[1051px]" />
          <MdiWindow title="Instruction List Mode" icon={<LdOutIcon />} place="top-0 left-0 h-[505px] w-[1051px]">
            <InstructionList />
          </MdiWindow>
          <MdiWindow title="Ladder Diagram Mode" icon={<LadderIcon />} place="top-[26px] left-[26px] h-[505px] w-[1051px]">
            <LadderDiagram />
          </MdiWindow>
          <MdiWindow title="View Register" icon={<TrafficIcon />} place="top-[79px] left-[79px] h-[473px] w-[1051px]" active>
            <ViewRegister />
          </MdiWindow>
        </div>
      </main>
      <StatusBar />
    </div>
  );
}
